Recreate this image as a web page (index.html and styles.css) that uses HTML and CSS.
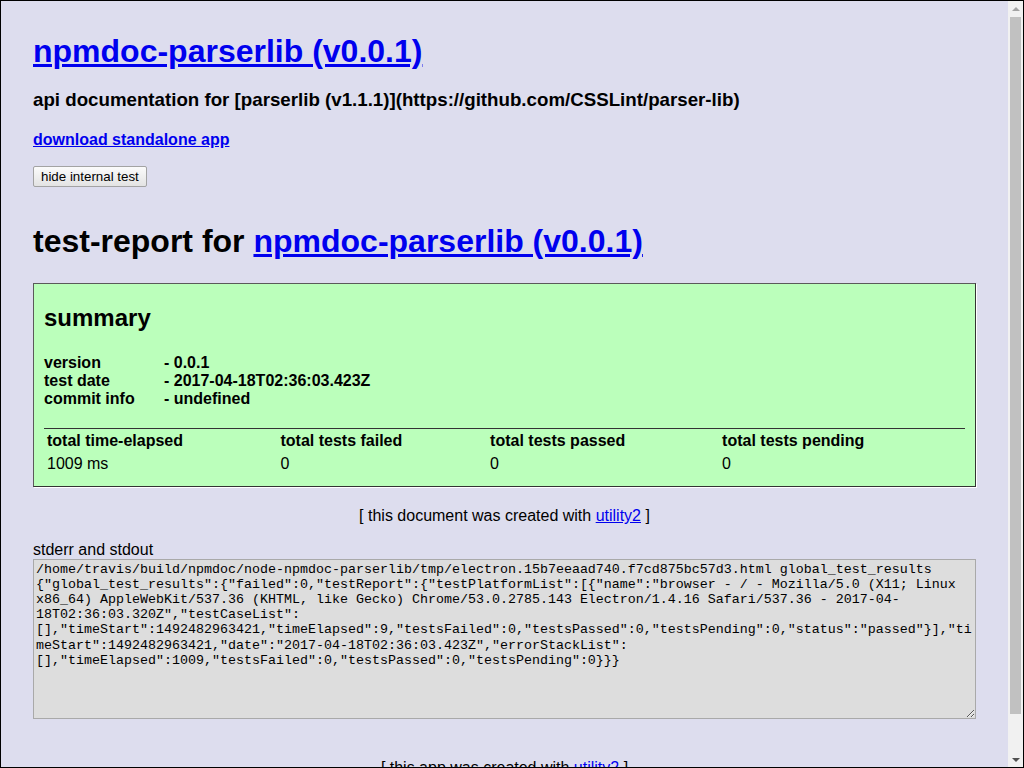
FILE: index.html
```html
<!DOCTYPE html>
<html lang="en">
<head>
<meta charset="utf-8">
<title>npmdoc-parserlib (v0.0.1)</title>
<link rel="stylesheet" href="styles.css">
</head>
<body>
<div class="frame">
  <div class="viewport">
    <div class="page">
      <h1 class="title"><a href="#">npmdoc-parserlib (v0.0.1)</a></h1>
      <h3 class="subtitle">api documentation for [parserlib (v1.1.1)](https://github.com/CSSLint/parser-lib)</h3>
      <h4 class="download"><a href="#">download standalone app</a></h4>
      <div class="controls"><button class="btn" type="button">hide internal test</button></div>

      <h1 class="report-title">test-report for <a href="#">npmdoc-parserlib (v0.0.1)</a></h1>

      <div class="summary">
        <h2 class="summary-title">summary</h2>
        <div class="info">
          <span class="info-key">version</span><span class="info-val">- 0.0.1</span>
          <span class="info-key">test date</span><span class="info-val">- 2017-04-18T02:36:03.423Z</span>
          <span class="info-key">commit info</span><span class="info-val">- undefined</span>
        </div>
        <table class="totals">
          <thead>
            <tr><th>total time-elapsed</th><th>total tests failed</th><th>total tests passed</th><th>total tests pending</th></tr>
          </thead>
          <tbody>
            <tr><td>1009 ms</td><td>0</td><td>0</td><td>0</td></tr>
          </tbody>
        </table>
      </div>

      <div class="footer">[ this document was created with <a href="#">utility2</a> ]</div>

      <div class="log-label">stderr and stdout</div>
      <textarea class="log" readonly>/home/travis/build/npmdoc/node-npmdoc-parserlib/tmp/electron.15b7eeaad740.f7cd875bc57d3.html global_test_results
{"global_test_results":{"failed":0,"testReport":{"testPlatformList":[{"name":"browser - / - Mozilla/5.0 (X11; Linux
x86_64) AppleWebKit/537.36 (KHTML, like Gecko) Chrome/53.0.2785.143 Electron/1.4.16 Safari/537.36 - 2017-04-
18T02:36:03.320Z","testCaseList":
[],"timeStart":1492482963421,"timeElapsed":9,"testsFailed":0,"testsPassed":0,"testsPending":0,"status":"passed"}],"ti
meStart":1492482963421,"date":"2017-04-18T02:36:03.423Z","errorStackList":
[],"timeElapsed":1009,"testsFailed":0,"testsPassed":0,"testsPending":0}}}</textarea>

      <div class="footer footer-app">[ this app was created with <a href="#">utility2</a> ]</div>
    </div>
  </div>
  <div class="scrollbar" aria-hidden="true">
    <div class="sb-arrow sb-up"></div>
    <div class="sb-track"><div class="sb-thumb"></div></div>
    <div class="sb-arrow sb-down"></div>
  </div>
</div>
</body>
</html>
```

FILE: styles.css
```css
* {
  box-sizing: border-box;
}

html,
body {
  margin: 0;
  padding: 0;
  overflow: hidden;
}

body {
  font-family: "Liberation Sans", Arial, Helvetica, sans-serif;
  color: #000;
}

a {
  color: #0000ee;
}

.frame {
  width: 1024px;
  height: 768px;
  border: 1px solid #000;
  background: #ddddee;
  display: flex;
}

.viewport {
  flex: 1;
  min-width: 0;
  overflow: hidden;
}

.page {
  padding: 32px;
}

.title {
  margin: 0 0 16px;
  font-size: 32px;
  line-height: 37px;
}

.subtitle {
  margin: 18.7px 0 0;
  font-size: 18.72px;
  line-height: 21.5px;
}

.download {
  margin: 21.3px 0 0;
  font-size: 16px;
  line-height: 18.4px;
}

.controls {
  margin-top: 16px;
  display: flex;
}

.btn {
  font-family: "Liberation Sans", Arial, sans-serif;
  font-size: 13.33px;
  height: 21px;
  padding: 0 7px;
  border: 1px solid #a3a3a3;
  border-radius: 2px;
  background: linear-gradient(#fbfbfb, #e3e3e3);
  color: #000;
}

.report-title {
  margin: 36px 0 0;
  font-size: 32px;
  line-height: 37px;
}

.summary {
  margin-top: 23px;
  background: #bbffbb;
  border: 1px solid;
  border-color: #5a5a5a #333 #333 #5a5a5a;
  box-shadow: 1px 1px 0 #fff;
  padding: 0 10px 10px;
}

.summary-title {
  margin: 20px 0 23px;
  font-size: 24px;
  line-height: 27.6px;
}

.info {
  display: grid;
  grid-template-columns: 120px auto;
  font-weight: bold;
  font-size: 16px;
  line-height: 18px;
}

.totals {
  margin-top: 20px;
  width: 100%;
  border-top: 1px solid #333;
  text-align: left;
  font-size: 16px;
}

.totals th,
.totals td {
  padding: 1px;
  line-height: 18.4px;
}

.footer {
  margin-top: 20px;
  text-align: center;
  font-size: 16px;
  line-height: 18.4px;
}

.log-label {
  margin-top: 15px;
  font-size: 16px;
  line-height: 18.4px;
}

.log {
  display: block;
  width: 100%;
  height: 160px;
  margin: 0;
  padding: 2px;
  background: #dddddd;
  border: 1px solid #a9a9a9;
  font-family: "Liberation Mono", "Courier New", monospace;
  font-size: 13.33px;
  line-height: 15.1px;
  color: #000;
}

.footer-app {
  margin-top: 40px;
}

/* drawn window scrollbar */
.scrollbar {
  width: 15px;
  flex: none;
  background: #f1f1f1;
  display: flex;
  flex-direction: column;
}

.sb-arrow {
  height: 15px;
  flex: none;
  display: flex;
  align-items: center;
  justify-content: center;
}

.sb-arrow::before {
  content: "";
  width: 0;
  height: 0;
  border-left: 4px solid transparent;
  border-right: 4px solid transparent;
}

.sb-up::before {
  border-bottom: 4px solid #a3a3a3;
}

.sb-down::before {
  border-top: 4px solid #505050;
}

.sb-track {
  flex: 1;
  padding: 1px 2px 0;
}

.sb-thumb {
  height: 697px;
  background: #c1c1c1;
}
```
